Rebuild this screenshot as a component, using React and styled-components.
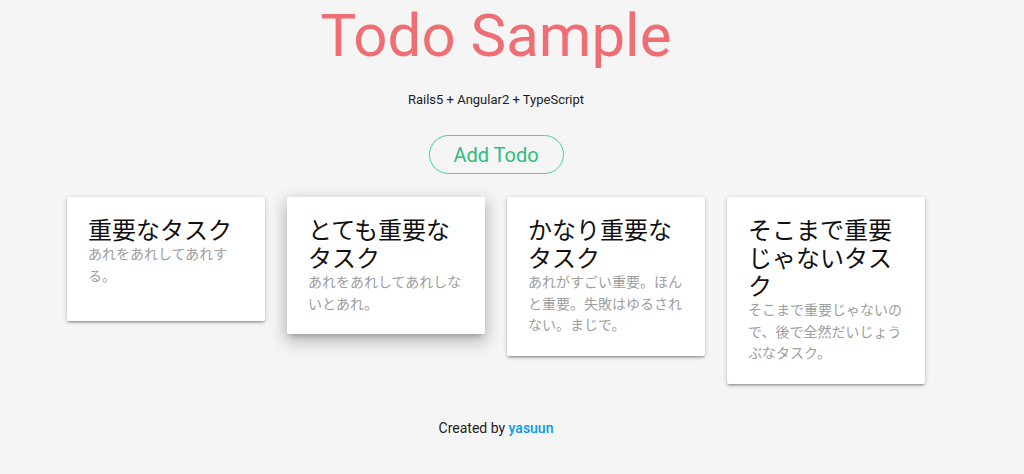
import React from "react";
import styled, { createGlobalStyle } from "styled-components";

const Global = createGlobalStyle`
  html, body { margin: 0; padding: 0; background: #f5f5f5; }
  body { font-family: Roboto, "Noto Sans CJK JP", sans-serif; color: rgba(0,0,0,0.87); }
`;

const Page = styled.div`
  width: 992px;
  display: flex;
  flex-direction: column;
  align-items: center;
`;

const Title = styled.h1`
  margin: 0;
  font-size: 60px;
  line-height: 72px;
  font-weight: 400;
  color: #ee6e73;
`;

const Subtitle = styled.p`
  margin: 18px 0 0;
  font-size: 13px;
  line-height: 20px;
  color: #222;
`;

const AddButton = styled.button`
  margin-top: 25px;
  box-sizing: border-box;
  height: 39px;
  width: 135px;
  border: 1px solid #4ccf98;
  border-radius: 20px;
  background: transparent;
  color: #2dbd7e;
  font-family: Roboto, sans-serif;
  font-size: 20px;
  cursor: pointer;
`;

const CardRow = styled.div`
  margin-top: 23px;
  display: flex;
  align-items: flex-start;
  gap: 22px;
`;

const Card = styled.div`
  box-sizing: border-box;
  width: 198px;
  min-height: 124px;
  padding: 18px 20px 20px 21px;
  background: #fff;
  border-radius: 2px;
  box-shadow: ${(p) =>
    p.$raised
      ? "0 8px 17px 2px rgba(0,0,0,0.14), 0 3px 14px 2px rgba(0,0,0,0.12), 0 5px 5px -3px rgba(0,0,0,0.2)"
      : "0 2px 2px 0 rgba(0,0,0,0.14), 0 3px 1px -2px rgba(0,0,0,0.12), 0 1px 5px 0 rgba(0,0,0,0.2)"};
`;

const CardTitle = styled.div`
  font-family: "Noto Sans CJK JP", sans-serif;
  font-size: 24px;
  line-height: 28px;
  color: #111;
`;

const CardText = styled.div`
  font-family: "Noto Sans CJK JP", sans-serif;
  font-size: 14px;
  line-height: 21.5px;
  color: #9e9e9e;
`;

const Footer = styled.p`
  margin: 34px 0 0;
  font-size: 14px;
  line-height: 20px;
  color: #222;
`;

const Link = styled.a`
  color: #039be5;
  font-weight: 500;
  text-decoration: none;
`;

const todos = [
  { title: "重要なタスク", text: "あれをあれしてあれする。" },
  { title: "とても重要なタスク", text: "あれをあれしてあれしないとあれ。", raised: true },
  { title: "かなり重要なタスク", text: "あれがすごい重要。ほんと重要。失敗はゆるされない。まじで。" },
  { title: "そこまで重要じゃないタスク", text: "そこまで重要じゃないので、後で全然だいじょうぶなタスク。" },
];

export default function App() {
  return (
    <>
      <Global />
      <Page>
        <Title>Todo Sample</Title>
        <Subtitle>Rails5 + Angular2 + TypeScript</Subtitle>
        <AddButton>Add Todo</AddButton>
        <CardRow>
          {todos.map((t) => (
            <Card key={t.title} $raised={t.raised}>
              <CardTitle>{t.title}</CardTitle>
              <CardText>{t.text}</CardText>
            </Card>
          ))}
        </CardRow>
        <Footer>
          Created by <Link href="#">yasuun</Link>
        </Footer>
      </Page>
    </>
  );
}
